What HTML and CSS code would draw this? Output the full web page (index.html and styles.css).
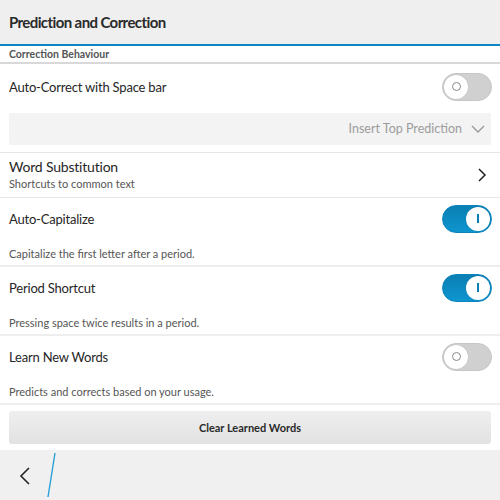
FILE: index.html
```html
<!DOCTYPE html>
<html lang="en">
<head>
    <meta charset="UTF-8">
    <title>Prediction and Correction</title>
    <link rel="stylesheet" href="styles.css">
</head>
<body>

<div class="title-bar">Prediction and Correction</div>

<div class="content">
    <div class="section-header">Correction Behaviour</div>

    <div class="row">
        <span class="row-title">Auto-Correct with Space bar</span>
        <div class="toggle"><div class="knob"></div></div>
    </div>
    <div class="dropdown-wrap">
        <div class="dropdown">
            <span>Insert Top Prediction</span>
            <svg width="14" height="10" viewBox="0 0 14 10"><path d="M1 2 L7 8 L13 2" fill="none" stroke="#9a9a9a" stroke-width="1.4"/></svg>
        </div>
    </div>

    <div class="row nav-row">
        <div>
            <div class="nav-title">Word Substitution</div>
            <div class="nav-sub">Shortcuts to common text</div>
        </div>
        <svg width="10" height="14" viewBox="0 0 10 14"><path d="M2 1 L8 7 L2 13" fill="none" stroke="#222" stroke-width="1.5"/></svg>
    </div>

    <div class="setting">
        <div class="setting-top">
            <span class="row-title">Auto-Capitalize</span>
            <div class="toggle on"><div class="knob"></div></div>
        </div>
        <div class="setting-desc">Capitalize the first letter after a period.</div>
    </div>

    <div class="setting">
        <div class="setting-top">
            <span class="row-title">Period Shortcut</span>
            <div class="toggle on"><div class="knob"></div></div>
        </div>
        <div class="setting-desc">Pressing space twice results in a period.</div>
    </div>

    <div class="setting">
        <div class="setting-top">
            <span class="row-title">Learn New Words</span>
            <div class="toggle"><div class="knob"></div></div>
        </div>
        <div class="setting-desc">Predicts and corrects based on your usage.</div>
    </div>

    <div class="button-wrap">
        <button class="clear-btn">Clear Learned Words</button>
    </div>
</div>

<div class="action-bar">
    <svg class="back" width="14" height="20" viewBox="0 0 14 20"><path d="M11 2 L3 10 L11 18" fill="none" stroke="#222" stroke-width="1.6"/></svg>
    <svg class="slash" width="12" height="46" viewBox="0 0 12 46"><path d="M9 1 L2 45" stroke="#2a9fd6" stroke-width="1.4"/></svg>
</div>

</body>
</html>
```

FILE: styles.css
```css
body {
    margin: 0;
    font-family: Lato, 'Open Sans', sans-serif;
    color: #262626;
    background: #fff;
    width: 500px;
    height: 500px;
    display: flex;
    flex-direction: column;
    overflow: hidden;
}

.title-bar {
    height: 44px;
    background: #efefef;
    border-bottom: 2px solid #0b86c3;
    display: flex;
    align-items: center;
    padding-left: 9px;
    font-size: 15px;
    letter-spacing: -0.6px;
    font-weight: bold;
    color: #2a2a2a;
}

.content {
    flex: 1;
    display: flex;
    flex-direction: column;
}

.section-header {
    height: 16px;
    padding-left: 9px;
    font-size: 10.5px;
    font-weight: bold;
    color: #555;
    border-bottom: 2px solid #d8d8d8;
    display: flex;
    align-items: center;
}

.row {
    height: 46px;
    display: flex;
    align-items: center;
    justify-content: space-between;
    padding: 0 8px 0 9px;
}

.row-title {
    font-size: 13px;
    letter-spacing: -0.2px;
}

.toggle {
    box-sizing: border-box;
    width: 50px;
    height: 28px;
    border-radius: 14px;
    background: #d0d0d0;
    border: 1px solid #c6c6c6;
    display: flex;
    align-items: center;
    padding: 0 1px;
}

.toggle .knob {
    width: 24px;
    height: 24px;
    border-radius: 50%;
    background: #fff;
    box-shadow: 0 0 1px rgba(0, 0, 0, 0.2);
    display: flex;
    align-items: center;
    justify-content: center;
}

/* small ring on the off knob, bar on the on knob */
.toggle .knob::after {
    content: "";
    width: 7px;
    height: 7px;
    border-radius: 50%;
    border: 1.3px solid #888;
}

.toggle.on {
    background: linear-gradient(#0a7fb4, #0f95cf);
    border-color: #0a84bb;
    justify-content: flex-end;
}

.toggle.on .knob::after {
    width: 1.5px;
    height: 9px;
    border: none;
    border-radius: 0;
    background: #0a7fb4;
}

.dropdown-wrap {
    padding: 3px 9px 7px;
    border-bottom: 1px solid #e6e6e6;
}

.dropdown {
    height: 32px;
    background: #f3f3f3;
    border-radius: 2px;
    display: flex;
    align-items: center;
    justify-content: flex-end;
    gap: 9px;
    padding-right: 6px;
    font-size: 12.5px;
    color: #9c9c9c;
}

.nav-row {
    height: 44px;
    padding-right: 13px;
    border-bottom: 1px solid #e6e6e6;
}

.nav-title {
    font-size: 14px;
    letter-spacing: -0.2px;
    line-height: 18px;
}

.nav-sub {
    font-size: 11px;
    color: #555;
    line-height: 15px;
}

.setting {
    height: 67px;
    border-bottom: 2px solid #eeeeee;
    padding: 0 8px 0 9px;
    display: flex;
    flex-direction: column;
}

.setting-top {
    height: 42px;
    display: flex;
    align-items: center;
    justify-content: space-between;
}

.setting-desc {
    font-size: 11px;
    color: #555;
    padding-top: 7px;
}

.button-wrap {
    padding: 6px 9px;
}

.clear-btn {
    width: 100%;
    height: 33px;
    border: none;
    border-radius: 3px;
    background: linear-gradient(#efefef, #e2e2e2);
    font-family: Lato, 'Open Sans', sans-serif;
    font-size: 11px;
    font-weight: bold;
    color: #2a2a2a;
}

.action-bar {
    height: 51px;
    background: #f0f0f0;
    display: flex;
    align-items: center;
    padding-left: 18px;
    gap: 14px;
}

.action-bar .back {
    margin-top: 2px;
}
```
